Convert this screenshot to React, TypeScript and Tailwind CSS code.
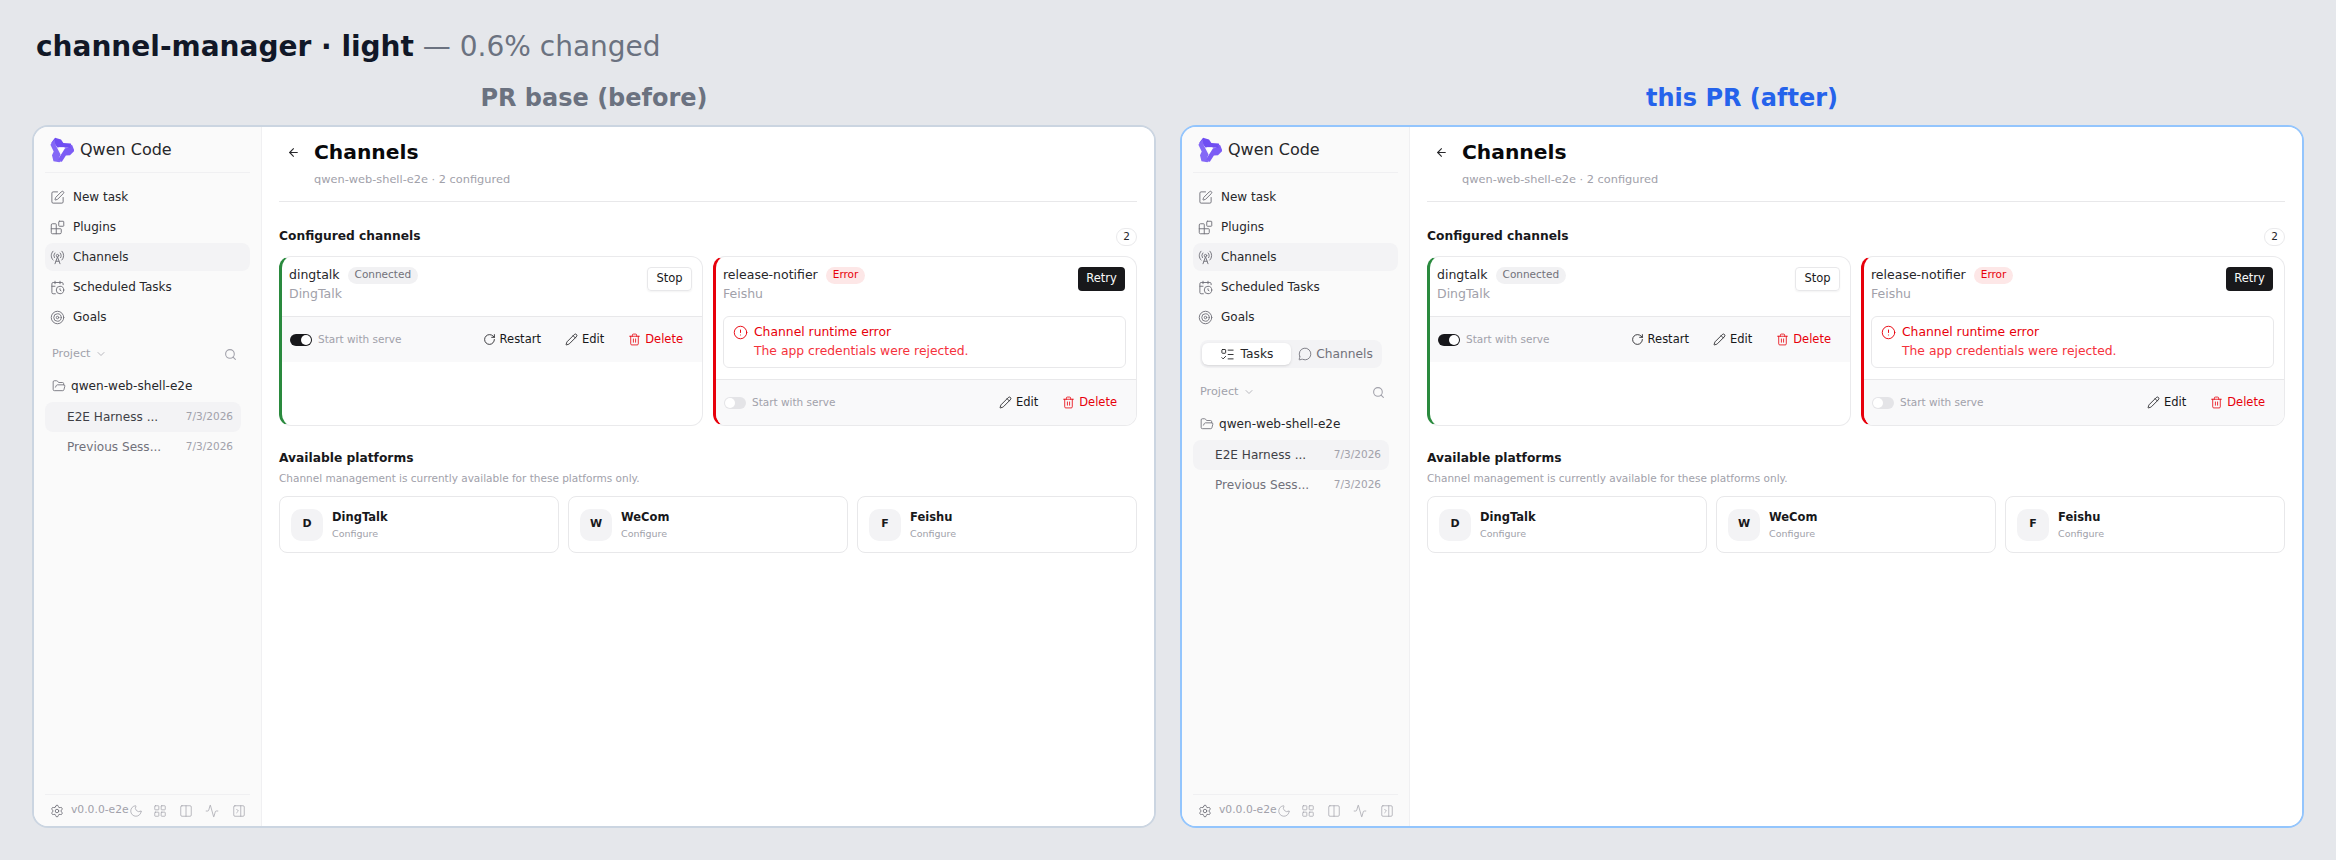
import {
  Activity,
  ArrowLeft,
  Blocks,
  CalendarClock,
  ChevronDown,
  CircleAlert,
  Columns2,
  FolderOpen,
  LayoutGrid,
  ListTodo,
  MessageCircle,
  Moon,
  PanelRightClose,
  Pencil,
  RadioTower,
  RotateCw,
  Search,
  Settings,
  SquarePen,
  Target,
  Trash2,
} from 'lucide-react';
import type { ReactNode } from 'react';

const logoBand = 'M6.5.8 12 2.4l2.2 3.1 6.8.4 2.4 5.8-4.9-1.7-9.8-.4L5.4 5.2 3.9 7.6 3 5.2z';

function QwenLogo() {
  return (
    <svg viewBox="0 0 24 24" className="w-[26px] h-[26px] shrink-0" fill="#6f4ef2">
      <path d={logoBand} />
      <path d={logoBand} fill="#7c5cf5" transform="rotate(120 12 12)" />
      <path d={logoBand} fill="#8468f6" transform="rotate(240 12 12)" />
      <path d="M9.5 9.5h6l-3 5.2z" fill="#ffffff" />
    </svg>
  );
}

function NavItem({ icon, label, active }: { icon: ReactNode; label: string; active?: boolean }) {
  return (
    <div className={`flex items-center h-[28px] mb-[2px] pl-[5px] rounded-lg gap-[8px] text-[12px] text-[#27272a] ${active ? 'bg-[#f3f3f5]' : ''}`}>
      <span className="w-[15px] flex justify-center text-[#71717a]">{icon}</span>
      {label}
    </div>
  );
}

function Sidebar({ tabs }: { tabs?: boolean }) {
  return (
    <aside className="w-[228px] shrink-0 h-full bg-[#fafafa] border-r border-[#f0f0f2] flex flex-col px-[11px]">
      <div className="h-[46px] shrink-0 flex items-center gap-[6px] pl-[3px] border-b border-[#f0f0f2] text-[16px] text-[#27272a]">
        <QwenLogo />
        Qwen Code
      </div>
      <nav className="pt-[10px]">
        <NavItem icon={<SquarePen size={15} strokeWidth={1.5} />} label="New task" />
        <NavItem icon={<Blocks size={15} strokeWidth={1.5} />} label="Plugins" />
        <NavItem icon={<RadioTower size={15} strokeWidth={1.5} />} label="Channels" active />
        <NavItem icon={<CalendarClock size={15} strokeWidth={1.5} />} label="Scheduled Tasks" />
        <NavItem icon={<Target size={15} strokeWidth={1.5} />} label="Goals" />
      </nav>
      {tabs && (
        <div className="mt-[7px] ml-[7px] w-[182px] h-[28px] rounded-lg bg-[#f3f3f5] flex items-center px-[2px] text-[12.25px]">
          <div className="w-[89px] h-[22px] bg-white rounded-md shadow-sm flex items-center justify-center gap-[6px] text-[#27272a]">
            <ListTodo size={15} strokeWidth={1.5} />
            Tasks
          </div>
          <div className="flex-1 flex items-center justify-center gap-[4px] text-[#71717a]">
            <MessageCircle size={14} strokeWidth={1.5} />
            Channels
          </div>
        </div>
      )}
      <div className={`${tabs ? 'mt-[16px]' : 'mt-[13px]'} h-[16px] flex items-center justify-between pl-[7px] pr-[13px] text-[11.25px] text-[#a1a1aa]`}>
        <span className="flex items-center gap-[4px]">
          Project
          <ChevronDown size={12} strokeWidth={1.5} />
        </span>
        <Search size={13} />
      </div>
      <div className="mt-[10px] h-[28px] flex items-center gap-[5px] pl-[7px] text-[12.1px] text-[#27272a]">
        <FolderOpen size={14} strokeWidth={1.5} className="text-[#71717a]" />
        qwen-web-shell-e2e
      </div>
      <div className="mt-[2px] w-[196px] h-[30px] bg-[#f3f3f5] rounded-lg flex items-center justify-between pl-[22px] pr-[8px] text-[12.1px] text-[#3f3f46]">
        <span>E2E Harness ...</span>
        <span className="text-[10.5px] text-[#a1a1aa]">7/3/2026</span>
      </div>
      <div className="w-[196px] h-[30px] rounded-lg flex items-center justify-between pl-[22px] pr-[8px] text-[12.1px] text-[#71717a]">
        <span>Previous Sess...</span>
        <span className="text-[10.5px] text-[#a1a1aa]">7/3/2026</span>
      </div>
      <div className="mt-auto h-[32px] border-t border-[#f0f0f2] flex items-center pl-[5px] text-[#a1a1aa]">
        <Settings size={14} strokeWidth={1.5} className="text-[#71717a]" />
        <span className="ml-[7px] w-[58px] text-[10.75px] whitespace-nowrap">v0.0.0-e2e</span>
        <Moon size={14} strokeWidth={1.25} />
        <LayoutGrid size={14} strokeWidth={1.25} className="ml-[10px]" />
        <Columns2 size={14} strokeWidth={1.25} className="ml-[12px]" />
        <Activity size={14} strokeWidth={1.25} className="ml-[12px]" />
        <PanelRightClose size={14} strokeWidth={1.25} className="ml-[13px]" />
      </div>
    </aside>
  );
}

function ActionButton({ icon, label, danger }: { icon: ReactNode; label: string; danger?: boolean }) {
  return (
    <span className={`flex items-center gap-[4px] text-[11.5px] ${danger ? 'text-[#e7000b]' : 'text-[#18181b]'}`}>
      {icon}
      {label}
    </span>
  );
}

function CardFooter({ on, restart }: { on: boolean; restart?: boolean }) {
  return (
    <div className="h-[46px] shrink-0 bg-[#f9f9fa] border-t border-[#e8e8ea] flex items-center pl-[8px] pr-[19px]">
      <div className={`w-[22px] h-[12px] rounded-full flex items-center px-[1px] ${on ? 'bg-[#18181b] justify-end' : 'bg-[#e4e4e7] justify-start'}`}>
        <div className="w-[10px] h-[10px] rounded-full bg-white" />
      </div>
      <span className="ml-[6px] text-[10.5px] text-[#a1a1aa]">Start with serve</span>
      <div className="ml-auto flex items-center gap-[24px]">
        {restart && <ActionButton icon={<RotateCw size={13} strokeWidth={1.5} />} label="Restart" />}
        <ActionButton icon={<Pencil size={13} strokeWidth={1.5} />} label="Edit" />
        <ActionButton icon={<Trash2 size={13} strokeWidth={1.5} />} label="Delete" danger />
      </div>
    </div>
  );
}

function CardHead({ name, badge, platform, button }: { name: string; badge: ReactNode; platform: string; button: ReactNode }) {
  return (
    <div className="h-[59px] shrink-0 flex items-start justify-between pl-[7px] pr-[10px] pt-[9px]">
      <div>
        <div className="flex items-center gap-[8px] h-[18px] text-[12.5px] text-[#27272a]">
          {name}
          {badge}
        </div>
        <div className="mt-[2px] text-[12.5px] leading-[16px] text-[#a1a1aa]">{platform}</div>
      </div>
      {button}
    </div>
  );
}

function ChannelCards() {
  return (
    <div className="mt-[10px] grid grid-cols-2 gap-[10px] h-[170px]">
      <div className="rounded-xl border border-[#eaeaec] border-l-[3px] border-l-[#2a8a3e] overflow-hidden flex flex-col">
        <CardHead
          name="dingtalk"
          platform="DingTalk"
          badge={<span className="h-[17px] px-[7px] rounded-full bg-[#f1f1f3] text-[10.5px] text-[#71717a] flex items-center">Connected</span>}
          button={<span className="mt-[1px] h-[24px] w-[45px] rounded border border-[#e8e8ea] shadow-xs flex items-center justify-center text-[11.5px] text-[#18181b]">Stop</span>}
        />
        <CardFooter on restart />
      </div>
      <div className="rounded-xl border border-[#eaeaec] border-l-[3px] border-l-[#e7000b] overflow-hidden flex flex-col">
        <CardHead
          name="release-notifier"
          platform="Feishu"
          badge={<span className="h-[17px] px-[7px] rounded-full bg-[#fde7e7] text-[10.5px] text-[#e7000b] flex items-center">Error</span>}
          button={<span className="mt-[1px] h-[24px] w-[47px] mr-[1px] rounded bg-[#18181b] flex items-center justify-center text-[11.5px] text-[#fafafa]">Retry</span>}
        />
        <div className="ml-[7px] mr-[10px] h-[52px] rounded-md border border-[#e8e8ea] flex items-start gap-[6px] pl-[9px] pt-[6px] text-[12.35px] text-[#e7000b] shrink-0">
          <CircleAlert size={15} strokeWidth={1.5} className="mt-[2px]" />
          <div className="leading-[19px]">
            <div>Channel runtime error</div>
            <div className="text-[#f5323c]">The app credentials were rejected.</div>
          </div>
        </div>
        <div className="mt-auto">
          <CardFooter on={false} />
        </div>
      </div>
    </div>
  );
}

function PlatformCard({ letter, name }: { letter: string; name: string }) {
  return (
    <div className="h-[57px] rounded-lg border border-[#e8e8ea] flex items-center gap-[9px] pl-[11px]">
      <div className="w-[32px] h-[32px] rounded-[10px] bg-[#f3f3f5] flex items-center justify-center text-[11px] font-bold text-[#18181b]">
        {letter}
      </div>
      <div>
        <div className="text-[11.5px] leading-[14px] font-bold text-[#18181b]">{name}</div>
        <div className="mt-[4px] text-[9.5px] leading-[12px] text-[#a1a1aa]">Configure</div>
      </div>
    </div>
  );
}

function ChannelsPage() {
  return (
    <main className="flex-1 min-w-0 bg-white px-[17px]">
      <div className="h-[75px] border-b border-[#e8e8ea] flex items-start">
        <ArrowLeft size={13} className="mt-[19px] ml-[8px] text-[#27272a]" />
        <div className="ml-[14px] pt-[12px]">
          <div className="text-[20.25px] leading-[26px] font-bold text-[#09090b]">Channels</div>
          <div className="mt-[6px] text-[11.35px] text-[#a1a1aa]">qwen-web-shell-e2e · 2 configured</div>
        </div>
      </div>
      <div className="mt-[25px] h-[19px] flex items-center justify-between">
        <span className="text-[12.25px] font-bold text-[#18181b]">Configured channels</span>
        <span className="w-[21px] h-[18px] rounded-full border border-[#eaeaec] flex items-center justify-center text-[10.5px] text-[#27272a]">2</span>
      </div>
      <ChannelCards />
      <div className="mt-[24px] text-[12.25px] leading-[16px] font-bold text-[#18181b]">Available platforms</div>
      <div className="mt-[5px] text-[10.5px] leading-[14px] text-[#a1a1aa]">Channel management is currently available for these platforms only.</div>
      <div className="mt-[11px] grid grid-cols-3 gap-[9px]">
        <PlatformCard letter="D" name="DingTalk" />
        <PlatformCard letter="W" name="WeCom" />
        <PlatformCard letter="F" name="Feishu" />
      </div>
    </main>
  );
}

function Panel({ title, after }: { title: string; after?: boolean }) {
  return (
    <section className="flex-1 min-w-0 flex flex-col">
      <h2 className={`text-center text-[24px] leading-[30px] font-bold ${after ? 'text-[#2563eb]' : 'text-[#6b7280]'}`}>{title}</h2>
      <div className={`mt-[12px] h-[703px] rounded-2xl border-2 overflow-hidden bg-white flex ${after ? 'border-[#93c5fd]' : 'border-[#cbd5e1]'}`}>
        <Sidebar tabs={after} />
        <ChannelsPage />
      </div>
    </section>
  );
}

export default function App() {
  return (
    <div className="w-[2336px] h-[860px] bg-[#e5e7eb] px-[32px] pt-[29px] font-['DejaVu_Sans',sans-serif]">
      <h1 className="pl-[4px] text-[28px] leading-[36px] text-[#6b7280]">
        <span className="font-bold text-[#111827]">channel-manager · light</span> — 0.6% changed
      </h1>
      <div className="mt-[18px] flex gap-[24px]">
        <Panel title="PR base (before)" />
        <Panel title="this PR (after)" after />
      </div>
    </div>
  );
}
